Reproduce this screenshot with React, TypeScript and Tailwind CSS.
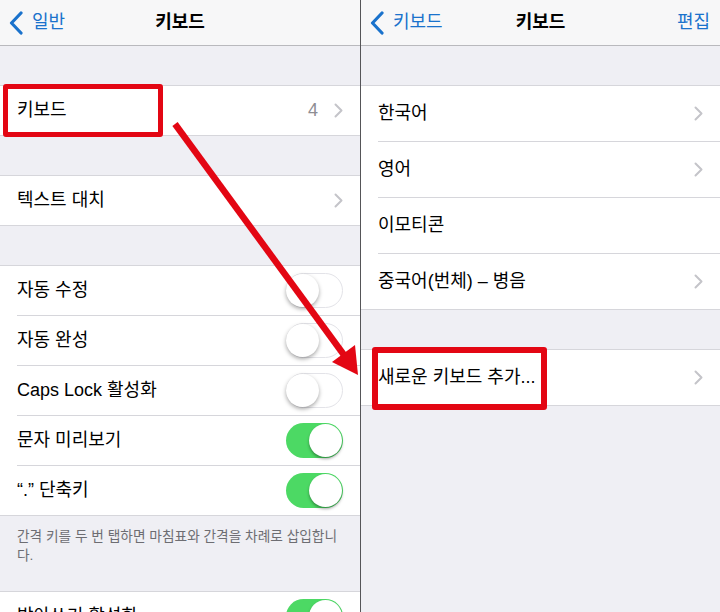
import React from "react";

const FONT = '"Liberation Sans", "Noto Sans CJK KR", sans-serif';

function Chevron({ className = "" }: { className?: string }) {
  return (
    <svg width="9" height="15" viewBox="0 0 9 15" className={className}>
      <polyline points="1.5,1.5 7.5,7.5 1.5,13.5" fill="none" stroke="#c4c4c9" strokeWidth="2" strokeLinecap="round" strokeLinejoin="round" />
    </svg>
  );
}

function BackChevron() {
  return (
    <svg width="14" height="24" viewBox="0 0 14 24">
      <polyline points="12,2 2.5,12 12,22" fill="none" stroke="#1a72cc" strokeWidth="3.2" strokeLinecap="round" strokeLinejoin="round" />
    </svg>
  );
}

function Toggle({ on }: { on: boolean }) {
  return on ? (
    <div className="relative h-[35px] w-[57px] shrink-0 rounded-full bg-[#4cd964]">
      <div className="absolute right-[1px] top-[1px] h-[33px] w-[33px] rounded-full bg-white shadow-[0_2px_3px_rgba(0,0,0,0.35)]" />
    </div>
  ) : (
    <div className="relative h-[35px] w-[57px] shrink-0 rounded-full border-[1.5px] border-[#e3e3e8] bg-white">
      <div className="absolute left-[-1px] top-[-0.5px] h-[33px] w-[33px] rounded-full bg-white shadow-[0_2px_4px_rgba(0,0,0,0.35)]" />
    </div>
  );
}

function Row({
  label,
  h,
  last = false,
  right,
}: {
  label: string;
  h: string;
  last?: boolean;
  right?: React.ReactNode;
}) {
  return (
    <div className={last ? "" : "pl-[17px]"}>
      <div
        className={`flex ${h} items-center justify-between border-b border-[#d6d6db] pr-[17px] ${last ? "pl-[17px]" : ""}`}
      >
        <span className="text-[18px] text-black">{label}</span>
        {right}
      </div>
    </div>
  );
}

function NavBar({ back, title, action }: { back: string; title: string; action?: string }) {
  return (
    <div className="grid h-[46px] shrink-0 grid-cols-[1fr_auto_1fr] items-center border-b border-[#b9b9bd] bg-[#f7f7f8]">
      <div className="flex items-center gap-[9px] pl-[9px]">
        <BackChevron />
        <span className="text-[18px] text-[#1a72cc]">{back}</span>
      </div>
      <div className="text-[18px] font-bold text-black">{title}</div>
      <div className="flex justify-end pr-[10px]">
        {action && <span className="text-[18px] text-[#1a72cc]">{action}</span>}
      </div>
    </div>
  );
}

export default function App() {
  return (
    <div className="relative flex h-[612px] w-[720px] overflow-hidden bg-[#efeff4]" style={{ fontFamily: FONT }}>
      {/* Left panel */}
      <div className="flex w-[360px] shrink-0 flex-col bg-[#efeff4]">
        <NavBar back="일반" title="키보드" />
        <div className="h-[39px] shrink-0" />
        <div className="shrink-0 border-t border-[#d6d6db] bg-white">
          <Row
            label="키보드"
            h="h-[50px]"
            last
            right={
              <div className="flex items-center gap-[16px]">
                <span className="text-[18px] text-[#8e8e93]">4</span>
                <Chevron />
              </div>
            }
          />
        </div>
        <div className="h-[39px] shrink-0" />
        <div className="shrink-0 border-t border-[#d6d6db] bg-white">
          <Row label="텍스트 대치" h="h-[50px]" last right={<Chevron />} />
        </div>
        <div className="h-[39px] shrink-0" />
        <div className="shrink-0 border-t border-[#d6d6db] bg-white">
          <Row label="자동 수정" h="h-[50px]" right={<Toggle on={false} />} />
          <Row label="자동 완성" h="h-[50px]" right={<Toggle on={false} />} />
          <Row label="Caps Lock 활성화" h="h-[50px]" right={<Toggle on={false} />} />
          <Row label="문자 미리보기" h="h-[50px]" right={<Toggle on />} />
          <Row label="“.” 단축키" h="h-[50px]" last right={<Toggle on />} />
        </div>
        <div className="h-[75px] shrink-0 px-[17px] pt-[11px] text-[13.7px] leading-[19px] text-[#6d6d72]">
          간격 키를 두 번 탭하면 마침표와 간격을 차례로 삽입합니
          <br />
          다.
        </div>
        <div className="shrink-0 border-t border-[#d6d6db] bg-white">
          <Row label="받아쓰기 활성화" h="h-[50px]" last right={<Toggle on />} />
        </div>
      </div>

      {/* Divider */}
      <div className="w-px shrink-0 bg-[#555558]" />

      {/* Right panel */}
      <div className="flex flex-1 flex-col bg-[#efeff4]">
        <NavBar back="키보드" title="키보드" action="편집" />
        <div className="h-[39px] shrink-0" />
        <div className="shrink-0 border-t border-[#d6d6db] bg-white">
          <Row label="한국어" h="h-[56px]" right={<Chevron />} />
          <Row label="영어" h="h-[56px]" right={<Chevron />} />
          <Row label="이모티콘" h="h-[56px]" />
          <Row label="중국어(번체) – 병음" h="h-[56px]" last right={<Chevron />} />
        </div>
        <div className="h-[39px] shrink-0" />
        <div className="shrink-0 border-t border-[#d6d6db] bg-white">
          <Row label="새로운 키보드 추가..." h="h-[56px]" last right={<Chevron />} />
        </div>
      </div>

      {/* Annotations */}
      <div className="pointer-events-none absolute left-[3px] top-[84px] h-[53px] w-[160px] rounded-[3px] border-[5px] border-[#e30613]" />
      <div className="pointer-events-none absolute left-[372px] top-[347px] h-[63px] w-[175px] rounded-[3px] border-[6px] border-[#e30613]" />
      <svg className="pointer-events-none absolute left-0 top-0" width="720" height="612" viewBox="0 0 720 612">
        <line x1="175" y1="124" x2="344" y2="355" stroke="#e30613" strokeWidth="6.5" />
        <polygon points="358,375 332,362 355,345" fill="#e30613" />
      </svg>
    </div>
  );
}
